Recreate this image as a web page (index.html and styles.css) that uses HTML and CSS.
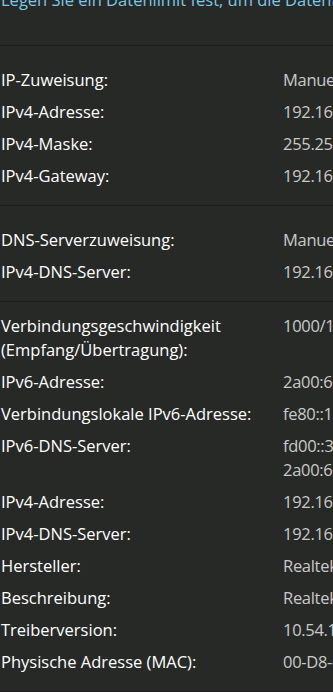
FILE: index.html
```html
<!DOCTYPE html>
<html lang="de">
<head>
  <meta charset="UTF-8" />
  <meta name="viewport" content="width=device-width, initial-scale=1" />
  <title>Ethernet-Eigenschaften</title>
  <link rel="stylesheet" href="styles.css">
</head>
<body>
  <div class="settings">
    <p class="settings__hint">Legen Sie ein Datenlimit fest, um die Datennutzung in diesem Netzwerk zu steuern.</p>

    <section class="props-group">
      <dl class="props">
        <dt>IP-Zuweisung:</dt><dd>Manuell</dd>
        <dt>IPv4-Adresse:</dt><dd>192.168.178.20</dd>
        <dt>IPv4-Maske:</dt><dd>255.255.255.0</dd>
        <dt>IPv4-Gateway:</dt><dd>192.168.178.1</dd>
      </dl>
    </section>

    <section class="props-group">
      <dl class="props">
        <dt>DNS-Serverzuweisung:</dt><dd>Manuell</dd>
        <dt>IPv4-DNS-Server:</dt><dd>192.168.178.1</dd>
      </dl>
    </section>

    <section class="props-group props-group--tight">
      <dl class="props">
        <dt>Verbindungsgeschwindigkeit (Empfang/Übertragung):</dt><dd>1000/1000 (Mbps)</dd>
        <dt>IPv6-Adresse:</dt><dd>2a00:6020:1000:3::20</dd>
        <dt>Verbindungslokale IPv6-Adresse:</dt><dd>fe80::1234:5678:9abc:def0%12</dd>
        <dt>IPv6-DNS-Server:</dt><dd>fd00::3681:c4ff:fe12:3456<br>2a00:6020:1000:3::1</dd>
        <dt>IPv4-Adresse:</dt><dd>192.168.178.20</dd>
        <dt>IPv4-DNS-Server:</dt><dd>192.168.178.1</dd>
        <dt>Hersteller:</dt><dd>Realtek</dd>
        <dt>Beschreibung:</dt><dd>Realtek PCIe GbE Family Controller</dd>
        <dt>Treiberversion:</dt><dd>10.54.1.3</dd>
        <dt>Physische Adresse (MAC):</dt><dd>00-D8-61-12-34-56</dd>
      </dl>
    </section>
  </div>
</body>
</html>
```

FILE: styles.css
```css
html, body {
  margin: 0;
  padding: 0;
  background: #272927;
  overflow: hidden;
}
body {
  font-family: 'Open Sans', 'Noto Sans', sans-serif;
  font-size: 16.5px;
  color: #ffffff;
}
.settings {
  width: 333px;
  overflow: hidden;
}
.settings__hint {
  margin: -12px 0 0;
  padding: 0 0 0 1px;
  height: 57px;
  line-height: 24px;
  color: #7cc8e8;
  white-space: nowrap;
}
/* Gruppen mit Trennlinie */
.props-group {
  border-top: 1px solid #1c1d1c;
  padding: 22px 0 17px 1px;
}
.props-group--tight {
  padding-top: 12px;
}
.props-group:last-child {
  border-bottom: 1px solid #1c1d1c;
}
.props {
  display: grid;
  grid-template-columns: 282px 1fr;
  row-gap: 8px;
  margin: 0;
  line-height: 24px;
}
.props dt {
  margin: 0;
  padding-right: 16px;
}
.props dd {
  margin: 0;
  min-width: 0;
  color: #c9c9c9;
  letter-spacing: -0.3px;
  white-space: nowrap;
  overflow: hidden;
}
```
